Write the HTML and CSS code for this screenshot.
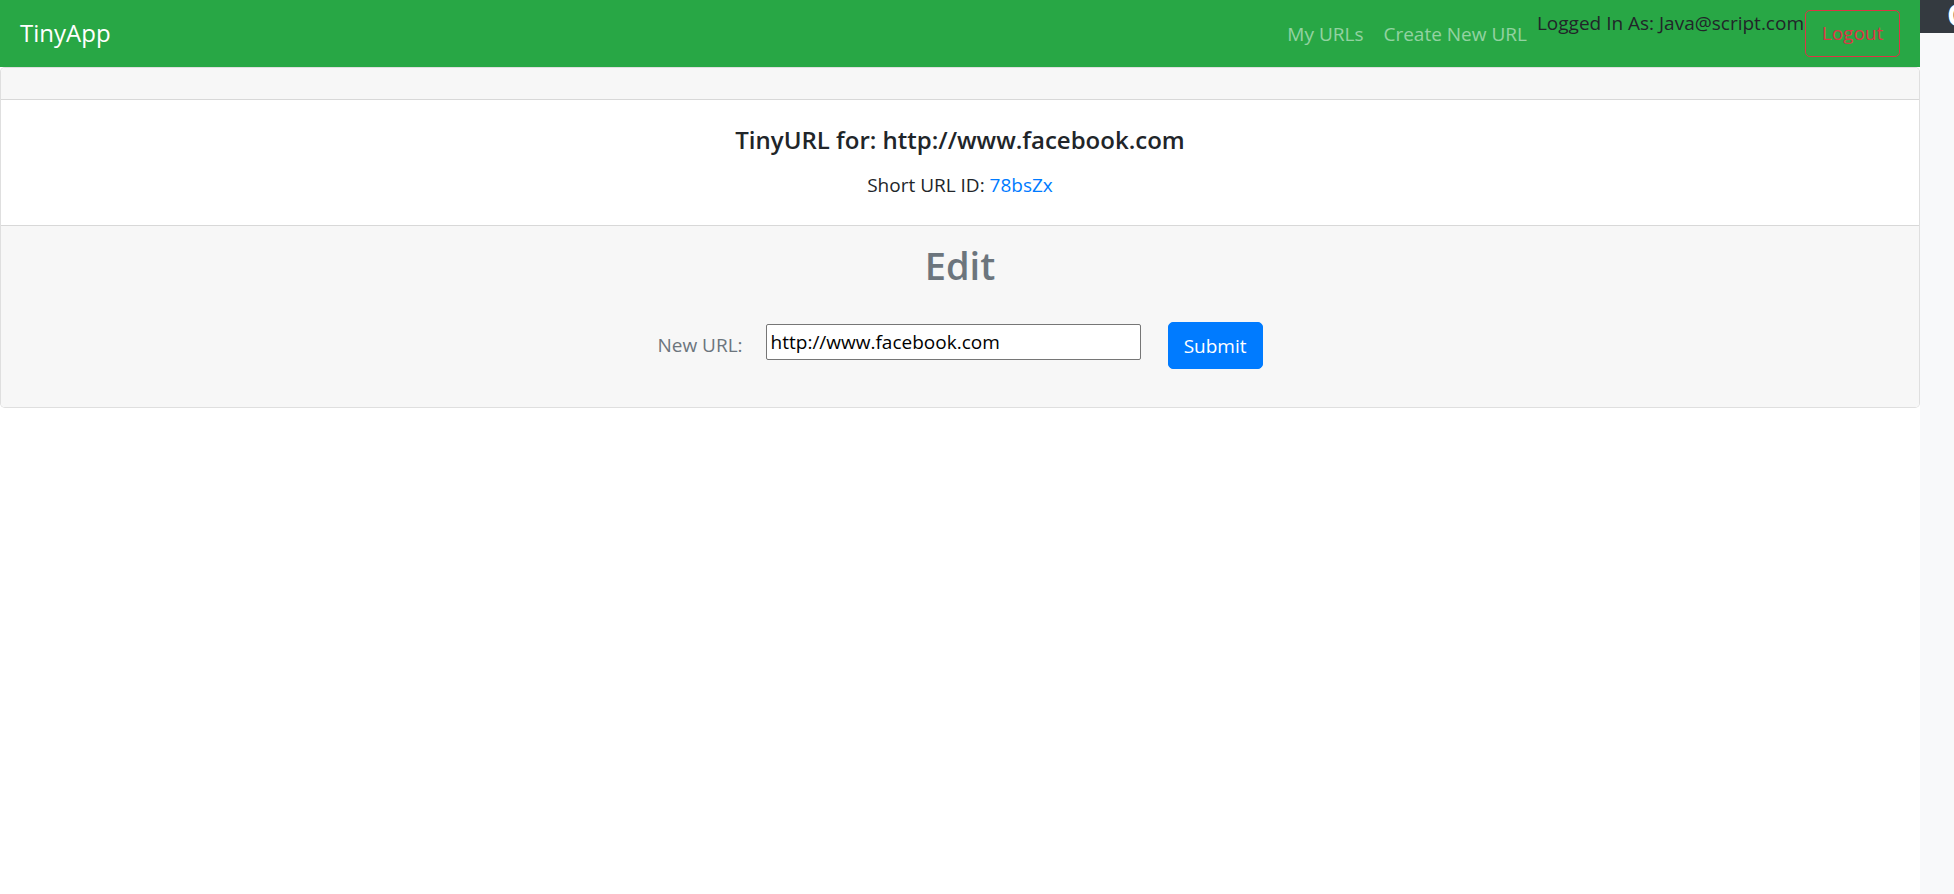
FILE: index.html
```html
<!DOCTYPE html>
<html lang="en">
<head>
<meta charset="utf-8">
<title>TinyApp</title>
<link rel="stylesheet" href="styles.css">
</head>
<body>
<div class="app">
  <div class="main">
    <nav class="navbar">
      <a class="brand" href="#">TinyApp</a>
      <div class="nav-right">
        <a class="nav-link" href="#">My URLs</a>
        <a class="nav-link" href="#">Create New URL</a>
        <span class="logged">Logged In As: Java@script.com</span>
        <button class="btn-logout" type="button">Logout</button>
      </div>
    </nav>
    <div class="card">
      <div class="card-header"></div>
      <div class="card-body">
        <h5 class="card-title">TinyURL for: http://www.facebook.com</h5>
        <p class="card-text">Short URL ID: <a class="short-link" href="#">78bsZx</a></p>
      </div>
      <div class="card-footer">
        <h2 class="edit-title">Edit</h2>
        <form class="edit-form">
          <label class="form-label" for="newurl">New URL:</label>
          <input class="url-input" id="newurl" type="text" value="http://www.facebook.com">
          <button class="btn-submit" type="submit">Submit</button>
        </form>
      </div>
    </div>
  </div>
  <aside class="side">
    <div class="side-top"><span class="side-glyph">C</span></div>
  </aside>
</div>
</body>
</html>
```
FILE: styles.css
```css
* { box-sizing: border-box; }
html, body { margin: 0; padding: 0; }
body {
  font-family: "Open Sans", "Noto Sans", "Liberation Sans", sans-serif;
  font-size: 19px;
  line-height: 1.5;
  color: #212529;
  background: #fff;
}
.app { display: flex; height: 100vh; overflow: hidden; }
.main { flex: 1; min-width: 0; }
.side { width: 34px; background: #f8f9fa; }
.side-top {
  height: 33px;
  background: #343a40;
  overflow: hidden;
  display: flex;
  justify-content: flex-end;
  align-items: flex-start;
}
.side-glyph {
  color: #fff;
  font-weight: 700;
  font-size: 30px;
  line-height: 30px;
  margin-right: -12px;
}

/* navbar */
.navbar {
  height: 67px;
  background: #28a745;
  display: flex;
  align-items: center;
  justify-content: space-between;
  padding: 0 20px;
}
.brand {
  color: #fff;
  text-decoration: none;
  font-size: 24px;
  line-height: 1.5;
  margin-top: -1px;
}
.nav-right { display: flex; align-items: center; height: 100%; }
.nav-link {
  color: rgba(255,255,255,.5);
  text-decoration: none;
  padding: 0 10px;
  margin-top: 1px;
}
.logged {
  align-self: flex-start;
  margin-top: 9px;
  color: #212529;
}
.btn-logout {
  font-family: inherit;
  font-size: 19px;
  line-height: 1.5;
  color: #dc3545;
  background: transparent;
  border: 1px solid #dc3545;
  border-radius: 5px;
  height: 47px;
  width: 95px;
  padding: 0;
  margin-left: 1px;
}

/* card */
.card {
  border: 1px solid rgba(0,0,0,.125);
  border-radius: 5px;
  background: #fff;
  overflow: hidden;
}
.card-header {
  height: 32px;
  background: #f7f7f7;
  border-bottom: 1px solid rgba(0,0,0,.125);
}
.card-body {
  padding: 25px;
  text-align: center;
}
.card-title {
  margin: 0 0 15px;
  font-size: 24px;
  font-weight: 600;
  line-height: 30px;
}
.card-text { margin: 0; line-height: 30px; }
.short-link { color: #007bff; text-decoration: none; }

.card-footer {
  background: #f7f7f7;
  border-top: 1px solid rgba(0,0,0,.125);
  padding: 15px 25px 16px;
  text-align: center;
}
.edit-title {
  margin: 0 0 10px;
  font-size: 38px;
  font-weight: 600;
  line-height: 48px;
  color: #6c757d;
}
.edit-form {
  display: flex;
  justify-content: center;
  align-items: center;
  padding: 23px 0 22px;
}
.form-label { color: #6c757d; margin-right: 23px; }
.url-input {
  width: 375px;
  height: 36px;
  font-family: inherit;
  font-size: 19px;
  color: #000;
  border: 1px solid #767676;
  border-radius: 2px;
  padding: 0 4px;
  background: #fff;
  margin-right: 27px;
  margin-bottom: 7px;
}
.btn-submit {
  font-family: inherit;
  font-size: 19px;
  color: #fff;
  background: #007bff;
  border: 1px solid #007bff;
  border-radius: 5px;
  height: 47px;
  width: 95px;
  padding: 0;
}
```
